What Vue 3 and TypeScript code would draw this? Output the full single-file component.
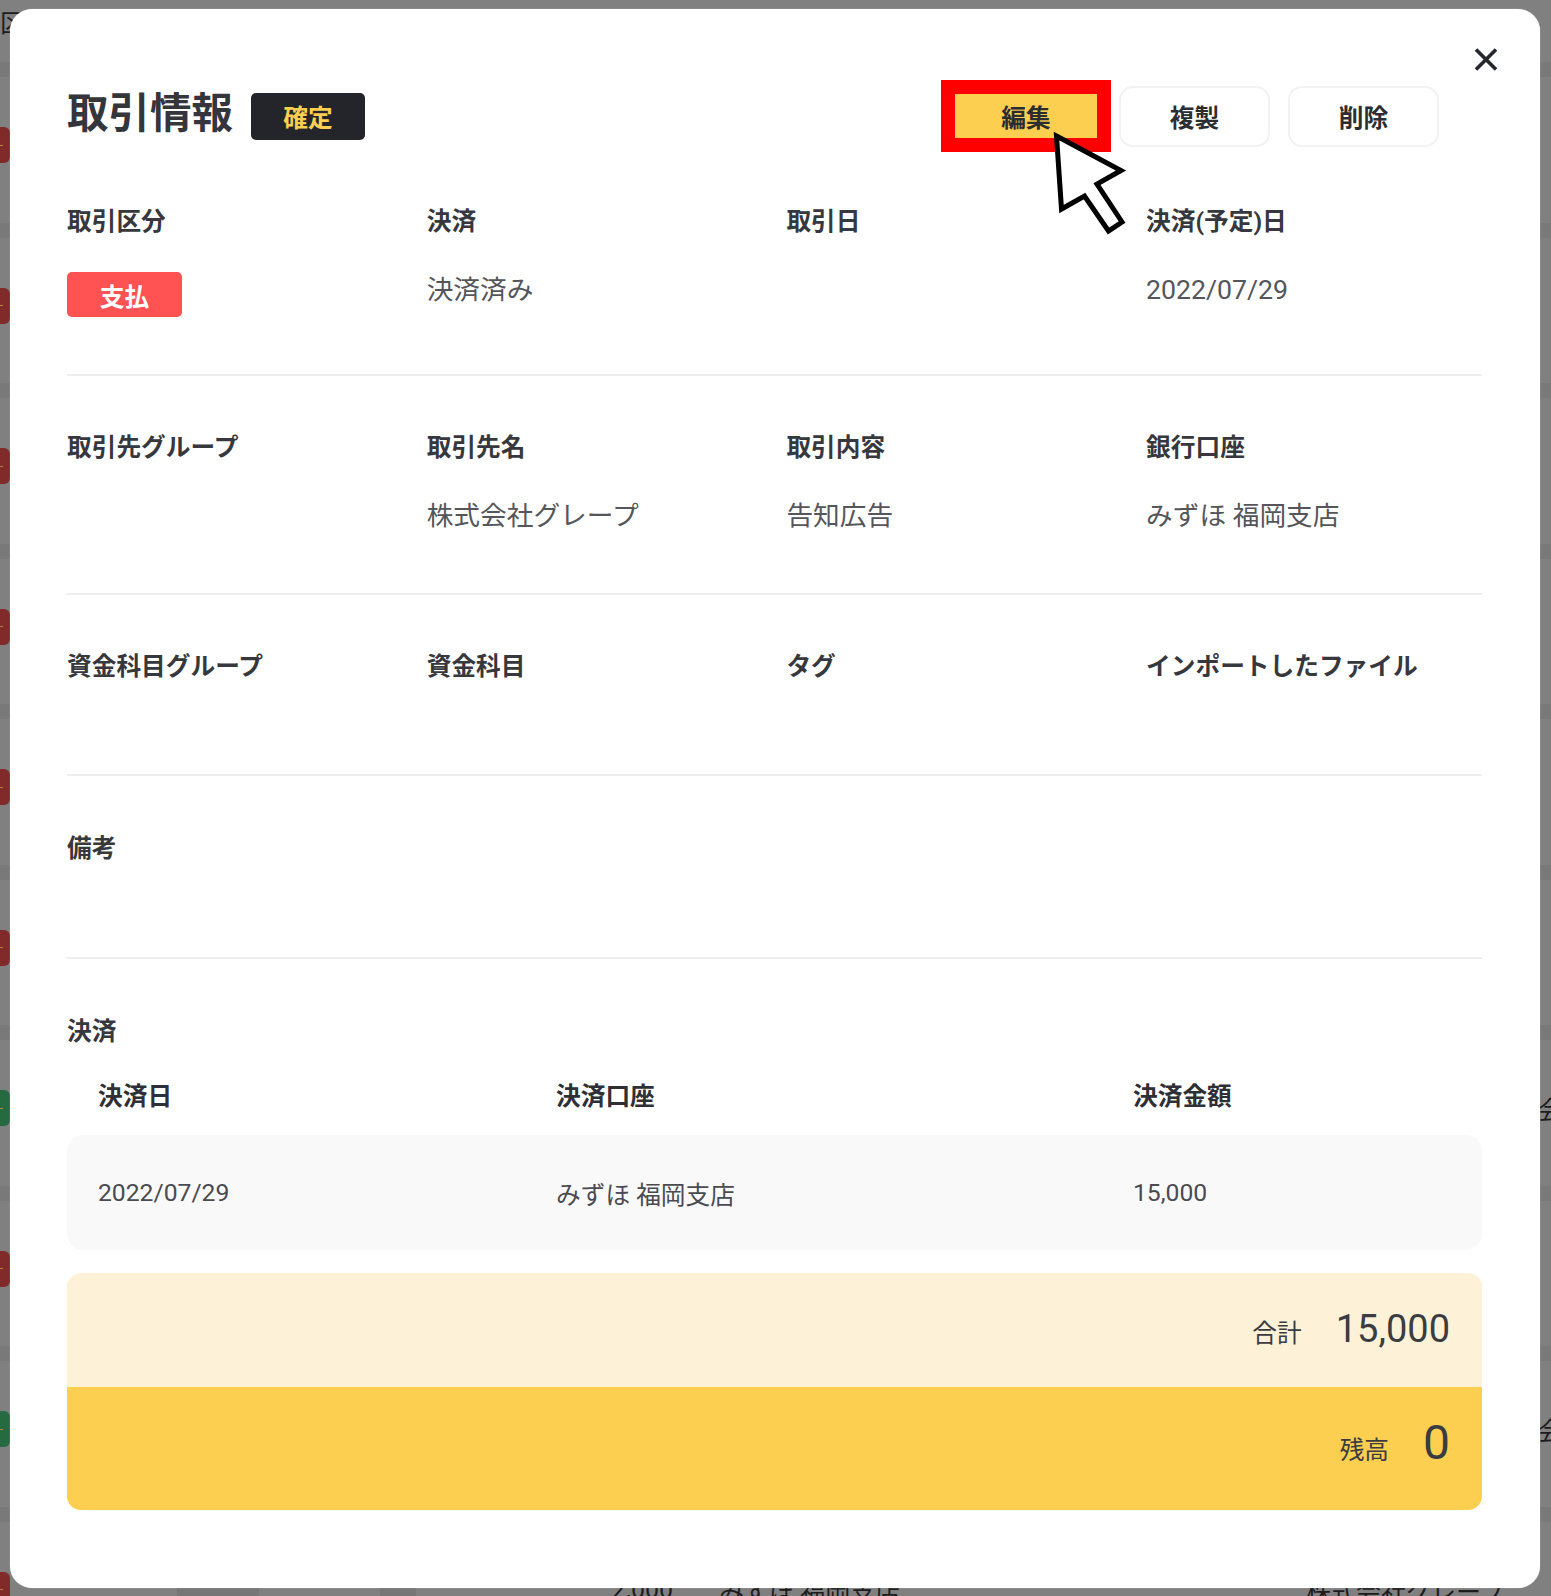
<template>
  <div class="page">
    <!-- dimmed list behind the dialog -->
    <div class="backdrop">
      <div class="backdrop-head">区</div>
      <div v-for="(row, i) in rows" :key="i" class="bg-row">
        <span class="chip" :class="row.kind"><i></i></span>
        <span class="bg-box wide"></span>
        <span class="bg-box small"></span>
        <span>2,000</span>
        <span>みずほ 福岡支店</span>
        <span class="note" :class="{ far: row.far }">{{ row.far ? '株式会社' : '株式会社グレープ' }}</span>
      </div>
    </div>

    <div class="modal">
      <button class="close" aria-label="閉じる">
        <svg viewBox="0 0 24 24" width="24" height="24">
          <path d="M2 1.5 22 21.5M22 1.5 2 21.5" fill="none" stroke="#25272d" stroke-width="3.6" />
        </svg>
      </button>

      <header class="head">
        <div class="head-left">
          <h1 class="title">取引情報</h1>
          <span class="tag dark">確定</span>
        </div>
        <div class="actions">
          <button class="btn edit">編集</button>
          <button class="btn">複製</button>
          <button class="btn">削除</button>
        </div>
      </header>

      <section class="info first">
        <div>
          <div class="label">取引区分</div>
          <span class="tag pay">支払</span>
        </div>
        <div>
          <div class="label">決済</div>
          <div class="value">決済済み</div>
        </div>
        <div>
          <div class="label">取引日</div>
        </div>
        <div>
          <div class="label">決済(予定)日</div>
          <div class="value">2022/07/29</div>
        </div>
      </section>

      <section class="info second">
        <div v-for="item in partnerInfo" :key="item.label">
          <div class="label">{{ item.label }}</div>
          <div class="value">{{ item.value }}</div>
        </div>
      </section>

      <section class="info third">
        <div v-for="label in fundLabels" :key="label" class="label">{{ label }}</div>
      </section>

      <section class="info fourth">
        <div class="label">備考</div>
      </section>

      <section class="payment">
        <div class="label">決済</div>
        <div class="pay-grid pay-head">
          <span>決済日</span>
          <span>決済口座</span>
          <span>決済金額</span>
        </div>
        <div class="pay-grid pay-row">
          <span>2022/07/29</span>
          <span>みずほ 福岡支店</span>
          <span>15,000</span>
        </div>
      </section>

      <div class="summary">
        <div class="sum-line total">
          <span class="sum-label">合計</span>
          <span class="sum-num">15,000</span>
        </div>
        <div class="sum-line balance">
          <span class="sum-label">残高</span>
          <span class="sum-num big">0</span>
        </div>
      </div>

      <!-- annotation arrow pointing at the edit button -->
      <svg class="cursor" viewBox="0 0 80 110" width="80" height="110">
        <path
          d="M6.5 8 71 42.5 47 56 72 94 58.5 103 34.5 68 11.5 81Z"
          fill="#fff"
          stroke="#000"
          stroke-width="5"
          stroke-linejoin="miter"
        />
      </svg>
    </div>
  </div>
</template>

<script setup lang="ts">
const kinds = ['red', 'red', 'red', 'red', 'red', 'red', 'green', 'red', 'green', 'red']

const rows = kinds.map((kind, i) => ({ kind, far: i === 6 || i === 8 }))

const partnerInfo = [
  { label: '取引先グループ', value: '' },
  { label: '取引先名', value: '株式会社グレープ' },
  { label: '取引内容', value: '告知広告' },
  { label: '銀行口座', value: 'みずほ 福岡支店' },
]

const fundLabels = ['資金科目グループ', '資金科目', 'タグ', 'インポートしたファイル']
</script>

<style>
html,
body {
  margin: 0;
  overflow: hidden;
  background: #808080;
}
</style>

<style scoped>
.page {
  position: relative;
  width: 1551px;
  height: 1596px;
  overflow: hidden;
  background: #808080;
  font-family: Roboto, 'Noto Sans CJK JP', sans-serif;
  color: #3b3c41;
}

.backdrop {
  display: flex;
  flex-direction: column;
  color: #1c1c1e;
  font-size: 25px;
}

.backdrop-head {
  height: 62px;
  box-sizing: border-box;
  padding-top: 6px;
  line-height: 36px;
}

.bg-row {
  display: grid;
  grid-template-columns: 177px 203px 232px 107px 587px auto;
  align-items: center;
  height: 160.5px;
  flex-shrink: 0;
  box-sizing: border-box;
  padding-top: 50px;
  border-top: 15px solid #797979;
  align-content: start;
  white-space: nowrap;
}

.chip {
  display: flex;
  align-items: center;
  width: 70px;
  height: 36px;
  margin-left: -60px;
  border-radius: 6px;
}

.chip i {
  width: 3px;
  height: 1px;
  margin-left: 60px;
  background: #b5843a;
}

.chip.red {
  background: #802a2a;
}

.chip.green {
  background: #266a42;
}

.bg-box {
  height: 36px;
  background: #767676;
  border-radius: 3px;
}

.bg-box.wide {
  width: 82px;
}

.bg-box.small {
  width: 36px;
}

.note.far {
  margin-left: 182px;
}

.modal {
  position: absolute;
  left: 10px;
  top: 9px;
  box-sizing: border-box;
  width: 1530px;
  height: 1579px;
  padding: 71px 58px 0 57px;
  background: #fff;
  border-radius: 22px;
  box-shadow: 0 0 1px rgba(255, 255, 255, 0.7);
}

.close {
  position: absolute;
  left: 1464px;
  top: 39px;
  width: 24px;
  height: 24px;
  padding: 0;
  border: 0;
  background: none;
}

.close svg {
  display: block;
}

.head {
  display: flex;
  align-items: center;
  justify-content: space-between;
  height: 72px;
  padding-right: 43px;
}

.head-left {
  display: flex;
  align-items: center;
  gap: 18px;
}

.title {
  margin: -4px 0 0;
  font-size: 41.5px;
  line-height: 56px;
  font-weight: 700;
  color: #35363b;
}

.tag {
  display: flex;
  align-items: center;
  justify-content: center;
  box-sizing: border-box;
  width: 114px;
  border-radius: 5px;
  font-size: 24.7px;
  font-weight: 700;
}

.tag.dark {
  height: 47px;
  background: #23252b;
  color: #fccf50;
}

.tag.pay {
  width: 115px;
  height: 45px;
  margin-top: 32px;
  background: #ff5252;
  color: #fff;
}

.actions {
  display: flex;
  align-items: center;
  gap: 18px;
}

.btn {
  box-sizing: border-box;
  width: 151px;
  height: 61px;
  padding: 0;
  background: #fff;
  border: 2px solid #f2f2f2;
  border-radius: 14px;
  font: 700 24.7px Roboto, 'Noto Sans CJK JP', sans-serif;
  color: #2c2d31;
}

.btn.edit {
  width: 170px;
  height: 72px;
  margin-right: -10px;
  background: #fccf50;
  border: 14px solid #ff0000;
  border-radius: 0;
}

.info {
  display: grid;
  grid-template-columns: repeat(3, 359.7px) 1fr;
  border-bottom: 2px solid #eeeeee;
}

.first {
  padding: 52px 0 57px;
}

.second {
  padding: 54px 0 57px;
}

.third {
  padding: 54px 0 89px;
}

.fourth {
  padding: 55px 0 90px;
}

.label {
  font-size: 24.7px;
  line-height: 36px;
  font-weight: 700;
  color: #37383d;
  white-space: nowrap;
}

.value {
  margin-top: 30px;
  font-size: 26.7px;
  line-height: 40px;
  color: #55565b;
  white-space: nowrap;
}

.payment {
  padding-top: 55px;
}

.pay-grid {
  display: grid;
  grid-template-columns: 458px 577px 1fr;
  padding: 0 31px;
  font-size: 24.7px;
}

.pay-head {
  margin-top: 29px;
  line-height: 36px;
  font-weight: 700;
  color: #2f3035;
}

.pay-row {
  align-items: center;
  height: 115px;
  margin-top: 20px;
  background: #f9f9f9;
  border-radius: 16px;
  color: #4a4b50;
}

.summary {
  margin-top: 23px;
  border-radius: 14px;
  overflow: hidden;
}

.sum-line {
  display: flex;
  align-items: baseline;
  justify-content: flex-end;
  gap: 34px;
  box-sizing: border-box;
  padding-right: 32px;
}

.total {
  height: 114px;
  padding-top: 31px;
  background: #fdf2d8;
}

.balance {
  height: 123px;
  padding-top: 26px;
  background: #fccf50;
}

.sum-label {
  font-size: 24.7px;
}

.sum-num {
  font-size: 38px;
  line-height: 50px;
}

.sum-num.big {
  font-size: 48px;
  line-height: 60px;
}

.cursor {
  position: absolute;
  left: 1040px;
  top: 119px;
}
</style>
